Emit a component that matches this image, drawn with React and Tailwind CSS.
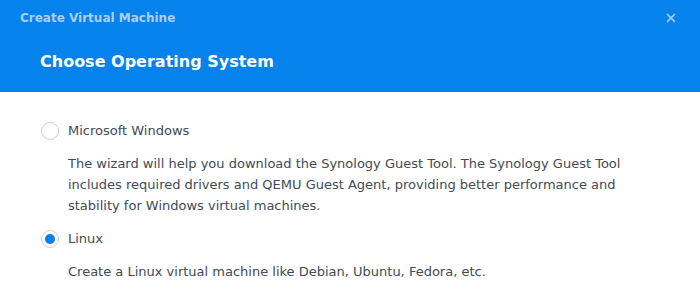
import { X } from 'lucide-react';

const FONT = { fontFamily: '"DejaVu Sans", Verdana, sans-serif' };

function Radio({ checked }) {
  return (
    <span className="w-[18px] h-[18px] rounded-full border border-[#c9d1d9] bg-white flex items-center justify-center shrink-0">
      {checked && <span className="w-[10px] h-[10px] rounded-full bg-[#0a7ee8]" />}
    </span>
  );
}

function Option({ label, checked, children }) {
  return (
    <div>
      <label className="flex items-center gap-[9px] h-[20px]">
        <Radio checked={checked} />
        <span className="text-[13px] text-[#414b55]">{label}</span>
      </label>
      <p className="pl-[27px] mt-[12px] text-[13px] leading-[21px] text-[#414b55]">{children}</p>
    </div>
  );
}

export default function App() {
  return (
    <div className="w-[700px] h-[290px] bg-white overflow-hidden" style={FONT}>
      <div className="h-[92px] bg-[#0682ec] px-[20px] pt-[9px]">
        <div className="flex items-center justify-between">
          <span className="text-[12px] font-bold text-[#a9d0f7]">Create Virtual Machine</span>
          <X size={14} strokeWidth={3} className="text-[#a9d0f7] mr-[2px]" />
        </div>
        <h1 className="mt-[23px] pl-[20px] text-[16px] font-bold text-white">Choose Operating System</h1>
      </div>
      <div className="pl-[41px] pt-[29px] flex flex-col gap-[13px]">
        <Option label="Microsoft Windows">
          The wizard will help you download the Synology Guest Tool. The Synology Guest Tool
          <br />
          includes required drivers and QEMU Guest Agent, providing better performance and
          <br />
          stability for Windows virtual machines.
        </Option>
        <Option label="Linux" checked>
          Create a Linux virtual machine like Debian, Ubuntu, Fedora, etc.
        </Option>
      </div>
    </div>
  );
}
